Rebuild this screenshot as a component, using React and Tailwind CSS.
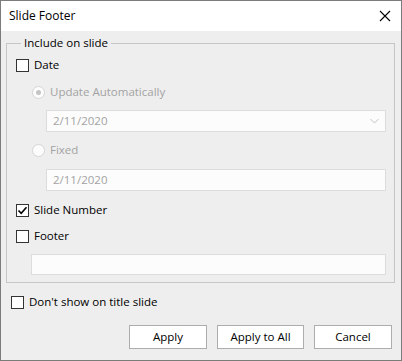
import React from "react";

const font = { fontFamily: '"Open Sans", "Noto Sans", Arial, sans-serif' };

const CheckBox = ({ checked }) => (
  <span className="w-[13px] h-[13px] border border-[#333333] bg-white flex items-center justify-center shrink-0">
    {checked && (
      <svg width="11" height="11" viewBox="0 0 11 11">
        <path d="M1.5 5.5 L4.2 8.3 L9.5 2.2" fill="none" stroke="#000" strokeWidth="1.6" />
      </svg>
    )}
  </span>
);

const Radio = ({ selected }) => (
  <span className="w-[13px] h-[13px] rounded-full border border-[#d6d6d6] bg-[#fcfcfc] flex items-center justify-center shrink-0">
    {selected && <span className="w-[5px] h-[5px] rounded-full bg-[#c4c4c4]" />}
  </span>
);

const App = () => {
  return (
    <div
      className="w-[402px] h-[361px] border border-[#7c7c7c] bg-[#eeeeee] flex flex-col text-[11.5px] text-black"
      style={font}
    >
      {/* Title bar */}
      <div className="h-[30px] bg-white flex items-center justify-between pl-[8px] pr-[10px]">
        <span className="text-[12px]">Slide Footer</span>
        <svg width="12" height="12" viewBox="0 0 12 12">
          <path d="M1 1 L11 11 M11 1 L1 11" stroke="#000" strokeWidth="1.1" />
        </svg>
      </div>

      {/* Group box */}
      <fieldset className="mt-[4px] ml-[5px] w-[389px] border border-[#c6c6c6] px-[9px] pb-[7px]">
        <legend className="ml-[5px] px-[3px] leading-[16px] h-[16px]">Include on slide</legend>

        <div className="mt-[6px] h-[16px] flex items-center gap-[5px]">
          <CheckBox />
          <span>Date</span>
        </div>

        <div className="mt-[11px] h-[16px] flex items-center gap-[5px] pl-[16px] text-[#a3a3a3]">
          <Radio selected />
          <span>Update Automatically</span>
        </div>

        <div className="mt-[10px] ml-[30px] mr-[-1px] h-[22px] border border-[#dcdcdc] bg-[#fcfcfc] flex items-center justify-between pl-[6px] pr-[6px] text-[#a3a3a3]">
          <span>2/11/2020</span>
          <svg width="9" height="6" viewBox="0 0 9 6">
            <path d="M0.5 1 L4.5 5 L8.5 1" fill="none" stroke="#c2c2c2" strokeWidth="1" />
          </svg>
        </div>

        <div className="mt-[10px] h-[16px] flex items-center gap-[5px] pl-[16px] text-[#a3a3a3]">
          <Radio />
          <span>Fixed</span>
        </div>

        <div className="mt-[11px] ml-[30px] mr-[-1px] h-[22px] border border-[#dcdcdc] bg-[#fcfcfc] flex items-center pl-[6px] text-[#a3a3a3]">
          <span>2/11/2020</span>
        </div>

        <div className="mt-[11px] h-[16px] flex items-center gap-[5px]">
          <CheckBox checked />
          <span>Slide Number</span>
        </div>

        <div className="mt-[10px] h-[16px] flex items-center gap-[5px]">
          <CheckBox />
          <span>Footer</span>
        </div>

        <div className="mt-[10px] ml-[15px] mr-[-1px] h-[21px] border border-[#dcdcdc] bg-[#fcfcfc]" />
      </fieldset>

      <div className="mt-[11px] ml-[10px] h-[16px] flex items-center gap-[5px]">
        <CheckBox />
        <span>Don't show on title slide</span>
      </div>

      <div className="mt-[15px] flex justify-end gap-[10px] pr-[9px]">
        <button className="w-[78px] h-[24px] border border-[#adadad] bg-white">Apply</button>
        <button className="w-[87px] h-[24px] border border-[#adadad] bg-white">Apply to All</button>
        <button className="w-[78px] h-[24px] border border-[#adadad] bg-white">Cancel</button>
      </div>
    </div>
  );
};

export default App;
